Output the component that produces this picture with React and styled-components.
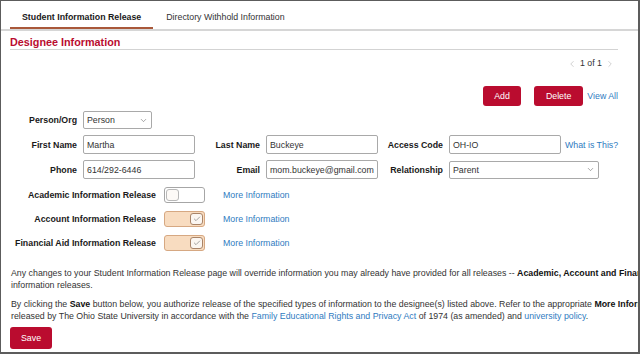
import React from 'react'
import styled, { createGlobalStyle } from 'styled-components'
import { ChevronDown, ChevronLeft, ChevronRight, Check } from 'lucide-react'

const GlobalStyle = createGlobalStyle`
    html, body {
        margin: 0;
        padding: 0;
        background: #ffffff;
    }
    body {
        font-family: 'Liberation Sans', Arial, sans-serif;
        font-size: 8.8px;
        color: #222;
    }
`

const Frame = styled.div`
    width: 640px;
    height: 354px;
    box-sizing: border-box;
    border-style: solid;
    border-color: #5c5c5c;
    border-width: 1px 2px 2px 1px;
    overflow: hidden;
    background: #fff;
`

const TabBar = styled.div`
    display: flex;
    height: 28px;
    padding-left: 9px;
    border-bottom: 2px solid #d6d6d6;
`

const Tab = styled.div`
    display: flex;
    align-items: center;
    padding: 4px 12px 0;
    margin-right: 1px;
    font-weight: ${({ active }) => (active ? 700 : 400)};
    color: ${({ active }) => (active ? '#1a1a1a' : '#333')};
    box-shadow: ${({ active }) => (active ? 'inset 0 -2px 0 #a9583a' : 'none')};
`

const Section = styled.div`
    padding: 0 20px 0 9px;
`

const Title = styled.h2`
    margin: 0;
    padding-top: 5px;
    font-size: 10.8px;
    line-height: 13px;
    font-weight: 700;
    color: #ba0c2f;
    border-bottom: 1px solid #d3d3d3;
`

const Pager = styled.div`
    display: flex;
    justify-content: flex-end;
    align-items: center;
    gap: 3px;
    margin-top: 8px;
    padding-right: 3px;
    line-height: 11px;
    color: #333;
    svg {
        color: #b5b5b5;
    }
`

const ActionRow = styled.div`
    display: flex;
    justify-content: flex-end;
    align-items: center;
    margin-top: 17px;
`

const RedButton = styled.button`
    height: ${({ tall }) => (tall ? '22px' : '20px')};
    padding: 0 ${({ wide }) => (wide ? '12px' : '11px')};
    margin-right: ${({ gap }) => gap || 0}px;
    border: none;
    border-radius: 3px;
    background: #ba0c2f;
    color: #fff;
    font-family: 'Liberation Sans', Arial, sans-serif;
    font-size: 8.8px;
    cursor: pointer;
`

const Link = styled.a`
    color: #2f7bbf;
    text-decoration: none;
    white-space: nowrap;
`

const FormGrid = styled.div`
    display: grid;
    grid-template-columns: 67px 112px 59px 112px 59px 112px auto;
    column-gap: 6px;
    row-gap: 6px;
    align-items: center;
    margin-top: 5px;
`

const Label = styled.label`
    text-align: right;
    font-weight: 700;
    color: #1a1a1a;
    white-space: nowrap;
`

const TextBox = styled.div`
    height: 19px;
    box-sizing: border-box;
    border: 1px solid #a9a9a9;
    border-radius: 2px;
    padding: 0 3px;
    display: flex;
    align-items: center;
    color: #333;
    white-space: nowrap;
    overflow: hidden;
`

const SelectBox = styled(TextBox)`
    height: 18px;
    justify-content: space-between;
    width: ${({ w }) => w}px;
    grid-column: ${({ span }) => (span ? `span ${span}` : 'auto')};
    svg {
        color: #666;
        flex: none;
    }
`

const Spacer = styled.div`
    grid-column: span ${({ span }) => span};
`

const WhatLink = styled(Link)`
    margin-left: -2px;
`

const ReleaseList = styled.div`
    display: flex;
    flex-direction: column;
    gap: 8px;
    margin-top: 8px;
`

const ReleaseRow = styled.div`
    display: grid;
    grid-template-columns: 146px 41px auto;
    column-gap: 8px;
    align-items: center;
    ${Link} {
        margin-left: 10px;
    }
`

const Toggle = styled.div`
    height: 16px;
    box-sizing: border-box;
    border: 1px solid ${({ checked }) => (checked ? '#d6a882' : '#a6a6a6')};
    border-radius: 3px;
    background: ${({ checked }) => (checked ? '#f8dcc0' : '#fff')};
    display: flex;
    align-items: center;
    justify-content: ${({ checked }) => (checked ? 'flex-end' : 'flex-start')};
    padding: 0 1px;
`

const Knob = styled.div`
    width: 13px;
    height: 12px;
    box-sizing: border-box;
    border: 1px solid ${({ checked }) => (checked ? '#a88469' : '#b8b8b8')};
    border-radius: 3px;
    background: ${({ checked }) => (checked ? '#fbf6f1' : '#fdfaf7')};
    display: flex;
    align-items: center;
    justify-content: center;
    svg {
        color: #7a7a7a;
    }
`

const Notes = styled.div`
    padding-left: 10px;
    margin-top: 16px;
    color: #333;
    line-height: 12px;
    white-space: nowrap;
    p {
        margin: 0 0 7px;
    }
    b {
        color: #111;
    }
`

const SaveWrap = styled.div`
    padding-left: 9px;
    margin-top: -2px;
`

const releases = [
    { label: 'Academic Information Release', checked: false },
    { label: 'Account Information Release', checked: true },
    { label: 'Financial Aid Information Release', checked: true },
]

export default function App() {
    return (
        <>
            <GlobalStyle />
            <Frame>
                <TabBar>
                    <Tab active>Student Information Release</Tab>
                    <Tab>Directory Withhold Information</Tab>
                </TabBar>
                <Section>
                    <Title>Designee Information</Title>
                    <Pager>
                        <ChevronLeft size={10} strokeWidth={1.5} />
                        <span>1 of 1</span>
                        <ChevronRight size={10} strokeWidth={1.5} />
                    </Pager>
                    <ActionRow>
                        <RedButton gap={13}>Add</RedButton>
                        <RedButton wide gap={4}>Delete</RedButton>
                        <Link href="#">View All</Link>
                    </ActionRow>
                    <FormGrid>
                        <Label>Person/Org</Label>
                        <SelectBox w={69} span={1}>
                            <span>Person</span>
                            <ChevronDown size={9} strokeWidth={1.5} />
                        </SelectBox>
                        <Spacer span={5} />

                        <Label>First Name</Label>
                        <TextBox>Martha</TextBox>
                        <Label>Last Name</Label>
                        <TextBox>Buckeye</TextBox>
                        <Label>Access Code</Label>
                        <TextBox>OH-IO</TextBox>
                        <WhatLink href="#">What is This?</WhatLink>

                        <Label>Phone</Label>
                        <TextBox>614/292-6446</TextBox>
                        <Label>Email</Label>
                        <TextBox>mom.buckeye@gmail.com</TextBox>
                        <Label>Relationship</Label>
                        <SelectBox w={150} span={2}>
                            <span>Parent</span>
                            <ChevronDown size={9} strokeWidth={1.5} />
                        </SelectBox>
                    </FormGrid>
                    <ReleaseList>
                        {releases.map((r) => (
                            <ReleaseRow key={r.label}>
                                <Label>{r.label}</Label>
                                <Toggle checked={r.checked}>
                                    <Knob checked={r.checked}>
                                        {r.checked && <Check size={8} strokeWidth={2} />}
                                    </Knob>
                                </Toggle>
                                <Link href="#">More Information</Link>
                            </ReleaseRow>
                        ))}
                    </ReleaseList>
                </Section>
                <Notes>
                    <p>
                        Any changes to your Student Information Release page will override information you may already have provided for all releases -- <b>Academic, Account and Financial Aid</b>
                        <br />
                        information releases.
                    </p>
                    <p>
                        By clicking the <b>Save</b> button below, you authorize release of the specified types of information to the designee(s) listed above. Refer to the appropriate <b>More Information</b> link for details on the information that will be
                        <br />
                        released by The Ohio State University in accordance with the <Link href="#">Family Educational Rights and Privacy Act</Link> of 1974 (as amended) and <Link href="#">university policy</Link>.
                    </p>
                </Notes>
                <SaveWrap>
                    <RedButton tall>Save</RedButton>
                </SaveWrap>
            </Frame>
        </>
    )
}
